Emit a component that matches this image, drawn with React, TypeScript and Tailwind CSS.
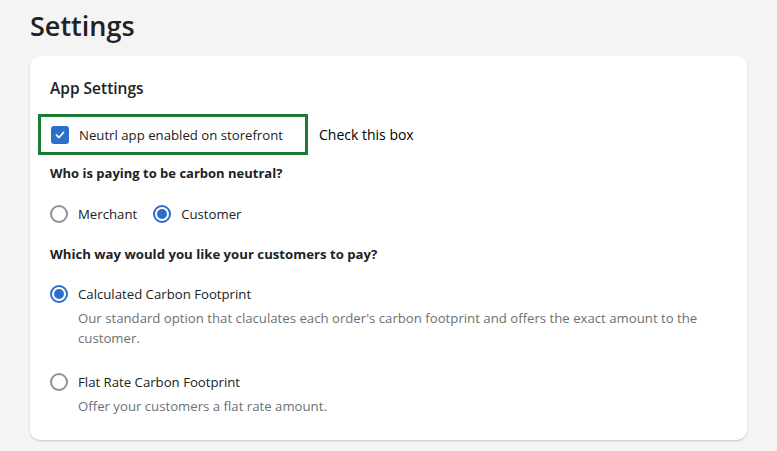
import React from "react";

function Checkbox() {
  return (
    <span className="h-[18px] w-[18px] rounded-[3px] bg-[#2c6ecb] flex items-center justify-center shrink-0">
      <svg width="12" height="12" viewBox="0 0 12 12" fill="none">
        <path d="M2.5 6.2 L5 8.5 L9.5 3.5" stroke="white" strokeWidth="1.8" strokeLinecap="round" strokeLinejoin="round" />
      </svg>
    </span>
  );
}

function Radio({ checked }: { checked?: boolean }) {
  return checked ? (
    <span className="h-[18px] w-[18px] rounded-full border-2 border-[#2c6ecb] flex items-center justify-center shrink-0">
      <span className="h-[10px] w-[10px] rounded-full bg-[#2c6ecb]" />
    </span>
  ) : (
    <span className="h-[18px] w-[18px] rounded-full border-2 border-[#8c9196] shrink-0" />
  );
}

export default function App() {
  return (
    <div
      className="min-h-[451px] bg-[#f4f4f4] px-[30px] pt-[6px] text-[#202223]"
      style={{ fontFamily: "'Open Sans', 'Noto Sans', sans-serif" }}
    >
      <h1 className="text-[27px] font-semibold leading-[40px] text-[#202223]">Settings</h1>

      <div className="mt-[10px] w-[717px] rounded-[10px] bg-white shadow-[0_1px_2px_rgba(0,0,0,0.2)] px-5 pt-[20px] pb-[24px]">
        <h2 className="text-[15.5px] font-semibold leading-[24px]">App Settings</h2>

        <div className="mt-[14px] flex items-center text-[13.2px] leading-[20px]">
          <div className="-ml-3 flex h-[41px] w-[270px] items-center gap-[10px] border-[3px] border-[#1b7a33] pl-[10px]">
            <Checkbox />
            <span>Neutrl app enabled on storefront</span>
          </div>
          <span className="ml-[11px] text-[14px] text-black">Check this box</span>
        </div>

        <p className="mt-[8px] text-[13px] font-bold leading-[20px]">Who is paying to be carbon neutral?</p>

        <div className="mt-[21px] flex items-center text-[13.2px] leading-[20px]">
          <label className="flex items-center gap-[10px]">
            <Radio />
            <span>Merchant</span>
          </label>
          <label className="ml-[16px] flex items-center gap-[10px]">
            <Radio checked />
            <span>Customer</span>
          </label>
        </div>

        <p className="mt-[20px] text-[13.2px] font-bold leading-[20px]">Which way would you like your customers to pay?</p>

        <div className="mt-[20px] text-[13.2px] leading-[20px]">
          <label className="flex items-center gap-[10px]">
            <Radio checked />
            <span>Calculated Carbon Footprint</span>
          </label>
          <p className="ml-[28px] mt-[4px] text-[#6d7175]">
            Our standard option that claculates each order's carbon footprint and offers the exact amount to the customer.
          </p>
        </div>

        <div className="mt-[24px] text-[13.2px] leading-[20px]">
          <label className="flex items-center gap-[10px]">
            <Radio />
            <span>Flat Rate Carbon Footprint</span>
          </label>
          <p className="ml-[28px] mt-[4px] text-[#6d7175]">
            Offer your customers a flat rate amount.
          </p>
        </div>
      </div>
    </div>
  );
}
